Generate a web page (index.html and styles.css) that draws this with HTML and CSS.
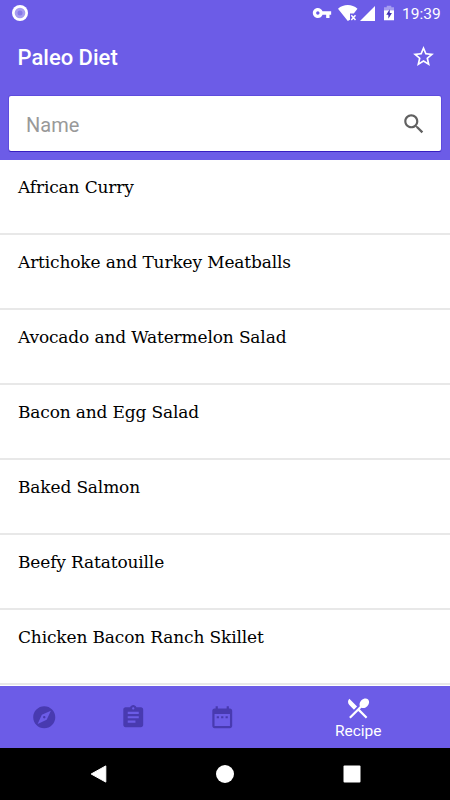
FILE: index.html
```
<!DOCTYPE html>
<html lang="en">
<head>
<meta charset="utf-8" />
<title>Paleo Diet</title>
<meta name="viewport" content="width=device-width, initial-scale=1.0" />
<link rel="stylesheet" href="styles.css">
</head>
<body>
<header>
  <div class="status">
    <svg class="record" viewBox="0 0 16 16"><circle cx="8" cy="8" r="8" fill="#fff"/><circle cx="8" cy="8" r="5.3" fill="#a79cf0"/><circle cx="8" cy="8" r="2.5" fill="#8779e9"/></svg>
    <svg class="key" viewBox="0 0 24 24"><path d="M12.65 10C11.83 7.67 9.61 6 7 6c-3.31 0-6 2.69-6 6s2.69 6 6 6c2.61 0 4.83-1.67 5.65-4H17v4h4v-4h2v-4H12.65zM7 14c-1.1 0-2-.9-2-2s.9-2 2-2 2 .9 2 2-.9 2-2 2z"/></svg>
    <svg class="wifi" viewBox="0 0 20 16"><path d="M0 3.7C5.5-1.1 14-1.1 19.5 3.7L15.8 8.4H12v6.3l-2.2 1.2z"/><path d="M13.3 10.3l4.2 4.6m0-4.6l-4.2 4.6" fill="none" stroke="#fff" stroke-width="1.5"/></svg>
    <svg class="signal" viewBox="0 0 16 16"><path d="M0 16L16 0v16z"/></svg>
    <svg class="battery" viewBox="0 0 11 16"><path d="M0 1.8h3V0h5v1.8h3V5H0z" opacity=".4"/><path d="M0 5h11v11H0z"/><path d="M6.3 3.8L2.5 10h2.3v4.3L8.7 8H6.3z" fill="#4331b5"/></svg>
    <span class="clock">19:39</span>
  </div>
  <div class="toolbar">
    <h1>Paleo Diet</h1>
    <svg class="star" viewBox="0 0 24 24"><path d="M22 9.24l-7.19-.62L12 2 9.19 8.63 2 9.24l5.46 4.73L5.82 21 12 17.27 18.18 21l-1.63-7.03L22 9.24zM12 15.4l-3.76 2.27 1-4.28-3.32-2.88 4.38-.38L12 6.1l1.71 4.04 4.38.38-3.32 2.88 1 4.28L12 15.4z"/></svg>
  </div>
  <div class="search">
    <span>Name</span>
    <svg viewBox="0 0 24 24"><path d="M15.5 14h-.79l-.28-.27C15.41 12.59 16 11.11 16 9.5 16 5.91 13.09 3 9.5 3S3 5.91 3 9.5 5.91 16 9.5 16c1.61 0 3.09-.59 4.23-1.57l.27.28v.79l5 4.99L20.49 19l-4.99-5zm-6 0C7.01 14 5 11.99 5 9.5S7.01 5 9.5 5 14 7.01 14 9.5 11.99 14 9.5 14z"/></svg>
  </div>
</header>
<ul class="recipes">
  <li>African Curry</li>
  <li>Artichoke and Turkey Meatballs</li>
  <li>Avocado and Watermelon Salad</li>
  <li>Bacon and Egg Salad</li>
  <li>Baked Salmon</li>
  <li>Beefy Ratatouille</li>
  <li>Chicken Bacon Ranch Skillet</li>
</ul>
<nav class="tabs">
  <a><svg viewBox="0 0 24 24"><path d="M12 10.9c-.61 0-1.1.49-1.1 1.1s.49 1.1 1.1 1.1c.61 0 1.1-.49 1.1-1.1s-.49-1.1-1.1-1.1zM12 2C6.48 2 2 6.48 2 12s4.48 10 10 10 10-4.48 10-10S17.52 2 12 2zm2.19 12.19L6 18l3.81-8.19L18 6l-3.81 8.19z"/></svg></a>
  <a><svg viewBox="0 0 24 24"><path d="M19 3h-4.18C14.4 1.84 13.3 1 12 1c-1.3 0-2.4.84-2.82 2H5c-1.1 0-2 .9-2 2v14c0 1.1.9 2 2 2h14c1.1 0 2-.9 2-2V5c0-1.1-.9-2-2-2zm-7 0c.55 0 1 .45 1 1s-.45 1-1 1-1-.45-1-1 .45-1 1-1zm2 14H7v-2h7v2zm3-4H7v-2h10v2zm0-4H7V7h10v2z"/></svg></a>
  <a><svg viewBox="0 0 24 24"><path d="M9 11H7v2h2v-2zm4 0h-2v2h2v-2zm4 0h-2v2h2v-2zm2-7h-1V2h-2v2H8V2H6v2H5c-1.11 0-1.99.9-1.99 2L3 20c0 1.1.89 2 2 2h14c1.1 0 2-.9 2-2V6c0-1.1-.9-2-2-2zm0 16H5V9h14v11z"/></svg></a>
  <a class="active"><svg viewBox="0 0 24 24"><path d="M8.1 13.34l2.83-2.83L3.91 3.5c-1.56 1.56-1.56 4.09 0 5.66l4.19 4.18zm6.78-1.81c1.53.71 3.68.21 5.27-1.38 1.91-1.91 2.28-4.65.81-6.12-1.46-1.46-4.2-1.1-6.12.81-1.59 1.59-2.09 3.74-1.38 5.27L3.7 19.87l1.41 1.41L12 14.41l6.88 6.88 1.41-1.41L13.41 13l1.47-1.47z"/></svg>Recipe</a>
</nav>
<div class="system">
  <svg viewBox="0 0 18 18"><path d="M1.2 9L15.8 .9v16.2z" stroke="#fff" stroke-linejoin="round"/></svg>
  <svg viewBox="0 0 18 18"><circle cx="9" cy="9" r="9"/></svg>
  <svg viewBox="0 0 18 18"><rect x=".5" y=".5" width="17" height="17" rx="1"/></svg>
</div>
</body>
</html>
```

FILE: styles.css
```
* {
  box-sizing: border-box;
}

body {
  margin: 0;
  height: 800px;
  display: flex;
  flex-direction: column;
  overflow: hidden;
  background: #fff;
  font-family: Roboto, sans-serif;
}

svg {
  display: block;
  flex: none;
  fill: currentColor;
}

header {
  height: 159.5px;
  background: #6c5ce7;
  color: #fff;
}

.status {
  height: 26px;
  padding: 0 8px 0 12px;
  display: flex;
  align-items: center;
}

.record {
  width: 16px;
  height: 16px;
  margin-right: auto;
}

.key {
  width: 20px;
  height: 20px;
  margin-right: 6px;
}

.wifi {
  width: 20px;
  height: 16px;
  margin-right: 2px;
}

.signal {
  width: 15px;
  height: 15px;
  margin-right: 9px;
}

.battery {
  width: 10px;
  height: 16px;
  margin-right: 8px;
}

.clock {
  width: 40px;
  font-size: 15.5px;
  line-height: 26px;
  padding-top: 2px;
}

.toolbar {
  height: 70px;
  padding: 0 14px 8px 17.5px;
  display: flex;
  align-items: center;
  justify-content: space-between;
}

h1 {
  margin: 0;
  padding-top: 1px;
  font-size: 22px;
  font-weight: 500;
}

.star {
  width: 25px;
  height: 25px;
  margin-bottom: 2px;
}

.search {
  height: 55px;
  margin: 0 9px;
  padding: 0 14px 0 17px;
  display: flex;
  align-items: center;
  justify-content: space-between;
  background: #fff;
  border-radius: 2px;
  box-shadow: 0 0 0 1px #4b35cf66, 0 1px 0 #2a10b8;
  color: #999;
  font-size: 20px;
}

.search span {
  padding-top: 2px;
}

.search svg {
  width: 26px;
  height: 26px;
  color: #616161;
}

.recipes {
  flex: 1;
  margin: 0;
  padding: 0;
  list-style: none;
  color: #000;
  font-family: "DejaVu Serif", serif;
  font-size: 17px;
  letter-spacing: -.15px;
}

.recipes li {
  height: 75px;
  padding: 17px 18px 0;
  line-height: 20px;
  border-bottom: 2px solid #e8e8e8;
}

.tabs {
  height: 61.5px;
  display: grid;
  grid-template-columns: 88.8px 88.8px 88.8px 1fr;
  background: #6c5ce7;
  color: #483ab0;
}

.tabs a {
  display: flex;
  flex-direction: column;
  align-items: center;
  justify-content: center;
}

.tabs svg {
  width: 26.5px;
  height: 26.5px;
}

.tabs .active {
  padding-top: 2px;
  color: #fff;
  font-size: 15.5px;
  line-height: 20px;
}

.system {
  height: 52.5px;
  padding: 0 89.5px;
  display: flex;
  align-items: center;
  justify-content: space-between;
  background: #000;
  color: #fff;
}

.system svg {
  width: 18px;
  height: 18px;
}
```
